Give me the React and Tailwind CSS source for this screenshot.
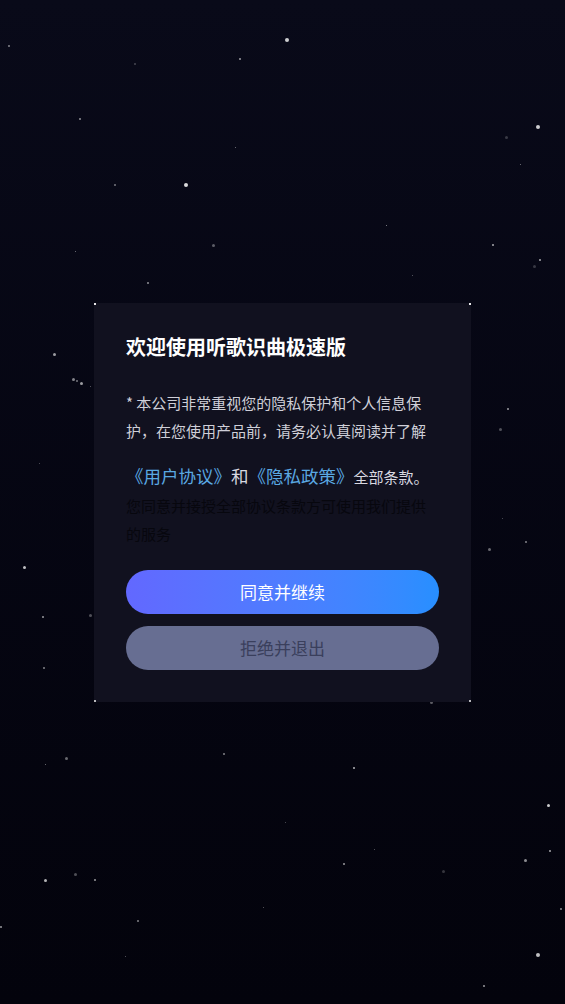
import React from "react";

const stars = [
  [9, 46, 2, 0.5], [135, 64, 2, 0.25], [287, 40, 4, 0.8], [240, 59, 2, 0.6], [80, 119, 2, 0.55],
  [235, 147, 1, 0.5], [538, 127, 4, 0.8], [506, 137, 3, 0.2], [520, 164, 1, 0.5], [115, 185, 2, 0.45],
  [186, 185, 4, 0.85], [386, 225, 1, 0.6], [213, 245, 3, 0.35], [75, 251, 1, 0.5], [493, 245, 2, 0.65],
  [540, 260, 2, 0.65], [534, 266, 3, 0.2], [412, 275, 1, 0.4], [148, 283, 2, 0.55],
  [54, 354, 3, 0.6], [73, 379, 3, 0.5], [77, 381, 2, 0.45], [81, 383, 3, 0.6], [90, 386, 1, 0.4],
  [39, 463, 1, 0.35], [24, 567, 3, 0.75], [43, 617, 2, 0.6], [90, 615, 3, 0.3], [44, 668, 2, 0.5],
  [508, 409, 2, 0.6], [500, 429, 3, 0.3], [502, 518, 1, 0.35], [526, 542, 2, 0.5], [489, 549, 3, 0.4],
  [431, 702, 3, 0.35], [66, 758, 3, 0.4], [45, 764, 1, 0.5], [224, 754, 2, 0.5], [354, 768, 2, 0.7],
  [548, 805, 3, 0.8], [285, 822, 1, 0.35], [374, 849, 1, 0.4], [344, 864, 2, 0.6], [550, 851, 2, 0.65],
  [525, 860, 3, 0.55], [443, 871, 3, 0.2], [75, 874, 3, 0.3], [45, 880, 3, 0.7], [95, 880, 2, 0.6],
  [263, 907, 1, 0.4], [561, 909, 2, 0.55], [1, 927, 2, 0.6], [138, 921, 2, 0.5], [125, 956, 1, 0.4],
  [538, 955, 4, 0.75], [484, 986, 2, 0.6],
];

export default function App() {
  return (
    <div
      className="relative w-[565px] h-[1004px] overflow-hidden bg-gradient-to-b from-[#090a19] to-[#03030c] flex items-center justify-center"
      style={{ fontFamily: '"Noto Sans CJK SC", "Noto Sans", sans-serif' }}
    >
      {stars.map(([x, y, s, o], i) => (
        <span
          key={i}
          className="absolute rounded-full bg-white"
          style={{ left: x - s / 2, top: y - s / 2, width: s, height: s, opacity: o }}
        />
      ))}

      <div className="relative w-[377px] h-[399px] bg-[#11111f] px-[32px] pt-[30px] flex flex-col">
        <span className="absolute left-0 top-0 w-[2px] h-[2px] bg-white/90" />
        <span className="absolute right-0 top-0 w-[2px] h-[2px] bg-white/90" />
        <span className="absolute left-0 bottom-0 w-[2px] h-[2px] bg-white/70" />
        <span className="absolute right-0 bottom-0 w-[2px] h-[2px] bg-white/70" />

        <h1 className="text-[20px] leading-[28px] font-bold text-white">欢迎使用听歌识曲极速版</h1>

        <p className="mt-[28px] text-[15px] leading-[28px] text-[#cfcfd8]">
          * 本公司非常重视您的隐私保护和个人信息保护，在您使用产品前，请务必认真阅读并了解
        </p>

        <p className="mt-[16px] leading-[30px] whitespace-nowrap">
          <span className="text-[17.5px] text-[#5aa8e2]">《用户协议》</span>
          <span className="text-[17.5px] text-[#d8d8e0]">和</span>
          <span className="text-[17.5px] text-[#5aa8e2]">《隐私政策》</span>
          <span className="text-[15px] text-[#d8d8e0]">全部条款。</span>
        </p>

        <p className="text-[15px] leading-[28px] text-[#07070e]">
          您同意并接授全部协议条款方可使用我们提供的服务
        </p>

        <button className="mt-[22px] h-[44px] w-full rounded-full bg-gradient-to-r from-[#6268ff] to-[#278fff] text-white text-[17px]">
          同意并继续
        </button>
        <button className="mt-[12px] h-[44px] w-full rounded-full bg-[#676e92] text-[#3a3f5c] text-[17px]">
          拒绝并退出
        </button>
      </div>
    </div>
  );
}
